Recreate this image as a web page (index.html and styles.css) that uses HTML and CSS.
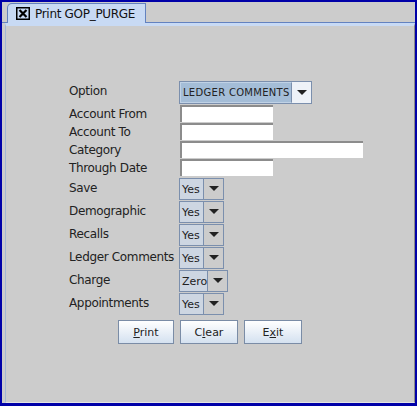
FILE: index.html
```html
<!DOCTYPE html>
<html lang="en">
<head>
    <meta charset="UTF-8">
    <title>Print GOP_PURGE</title>
    <link rel="stylesheet" href="styles.css">
</head>
<body>
<div class="window">
    <div class="tabbar">
        <div class="tab">
            <svg class="close" width="14" height="13" viewBox="0 0 14 13">
                <rect x="0.75" y="0.75" width="12.5" height="11.5" fill="none" stroke="#000" stroke-width="1.5"/>
                <path d="M3.5 3 L10.5 10 M10.5 3 L3.5 10" stroke="#000" stroke-width="2.2"/>
            </svg>
            <span>Print GOP_PURGE</span>
        </div>
    </div>

    <div class="panel">
        <form class="form" onsubmit="event.preventDefault();">
            <div class="row row-option">
                <label>Option</label>
                <div class="combo combo-option">
                    <span class="value">LEDGER COMMENTS</span>
                    <span class="arrow"></span>
                </div>
            </div>
            <div class="row row-field">
                <label for="acctFrom">Account From</label>
                <input type="text" id="acctFrom" class="field">
            </div>
            <div class="row row-field">
                <label for="acctTo">Account To</label>
                <input type="text" id="acctTo" class="field">
            </div>
            <div class="row row-field">
                <label for="category">Category</label>
                <input type="text" id="category" class="field field-wide">
            </div>
            <div class="row row-field">
                <label for="throughDate">Through Date</label>
                <input type="text" id="throughDate" class="field">
            </div>
            <div class="row row-combo">
                <label>Save</label>
                <div class="combo"><span class="value">Yes</span><span class="arrow"></span></div>
            </div>
            <div class="row row-combo">
                <label>Demographic</label>
                <div class="combo"><span class="value">Yes</span><span class="arrow"></span></div>
            </div>
            <div class="row row-combo">
                <label>Recalls</label>
                <div class="combo"><span class="value">Yes</span><span class="arrow"></span></div>
            </div>
            <div class="row row-combo">
                <label>Ledger Comments</label>
                <div class="combo"><span class="value">Yes</span><span class="arrow"></span></div>
            </div>
            <div class="row row-combo">
                <label>Charge</label>
                <div class="combo"><span class="value value-wide">Zero</span><span class="arrow"></span></div>
            </div>
            <div class="row row-combo">
                <label>Appointments</label>
                <div class="combo"><span class="value">Yes</span><span class="arrow"></span></div>
            </div>

            <div class="buttons">
                <button type="button" class="btn btn-print"><u>P</u>rint</button>
                <button type="button" class="btn">C<u>l</u>ear</button>
                <button type="button" class="btn">E<u>x</u>it</button>
            </div>
        </form>
    </div>
</div>
</body>
</html>
```

FILE: styles.css
```css
body {
    margin: 0;
    background: #0000a8;
    font-family: "DejaVu Sans", sans-serif;
    font-size: 12px;
    color: #222;
}

/* Janela interna */
.window {
    margin: 2px 2px 3px 2px;
    height: 401px;
    background: #cccccc;
    display: flex;
    flex-direction: column;
}

.tabbar {
    height: 20px;
    border-bottom: 1px solid #6382bf;
    display: flex;
    align-items: flex-end;
    padding-left: 5px;
}

.tab {
    height: 20px;
    width: 139px;
    box-sizing: border-box;
    border: 1px solid #6382bf;
    border-bottom: none;
    border-top-left-radius: 5px;
    background: #c8daf4;
    margin-bottom: -1px;
    display: flex;
    align-items: center;
    gap: 5px;
    padding-left: 8px;
    color: #111;
    font-size: 12px;
    letter-spacing: -0.3px;
    white-space: nowrap;
}

.panel {
    flex: 1;
    margin-left: 3px;
    border-top: 3px solid #c8daf4;
    border-left: 1px solid #a3b6d6;
    border-right: 1px solid #8a8a8a;
    border-bottom: 1px solid #e4e4e4;
    padding: 55px 0 0 63px;
}

/* Linhas do formulário */
.row {
    display: flex;
    align-items: center;
}

.row label {
    width: 110px;
    flex-shrink: 0;
    padding-bottom: 2px;
    white-space: nowrap;
    letter-spacing: -0.35px;
}

.row-option {
    height: 24px;
    align-items: flex-start;
}

.row-option label {
    padding-top: 3px;
}

.row-field {
    height: 18px;
    align-items: flex-start;
}

.row-field label {
    padding-top: 2px;
}

.row-combo {
    height: 23px;
}

.field {
    height: 17px;
    width: 93px;
    box-sizing: border-box;
    margin: 0 0 0 1px;
    padding: 0 2px;
    background: #fff;
    border: none;
    border-top: 2px solid #8c8c8c;
    border-left: 2px solid #8c8c8c;
    font-family: inherit;
    font-size: 12px;
}

.field-wide {
    width: 183px;
}

/* Combos */
.combo {
    display: flex;
    height: 22px;
    box-sizing: border-box;
    border: 1px solid #7b8fad;
    font-size: 11px;
}

.combo .value {
    display: flex;
    align-items: center;
    width: 21px;
    padding-left: 2px;
    padding-top: 2px;
    background: #cdd6e2;
    border-right: 1px solid #7b8fad;
    white-space: nowrap;
}

.combo .value-wide {
    width: 25px;
}

.combo .arrow {
    width: 19px;
    display: flex;
    align-items: center;
    justify-content: center;
    background: #cccccc;
}

.combo .arrow::after {
    content: "";
    border-left: 5px solid transparent;
    border-right: 5px solid transparent;
    border-top: 5px solid #222;
}

.combo-option {
    height: 23px;
}

.combo-option .value {
    width: 108px;
    padding-left: 2px;
    padding-top: 0;
    background: #a4bdd7;
    border: 1px solid #c0d2e6;
    border-right: 1px solid #7b8fad;
    letter-spacing: 0.3px;
    font-size: 10px;
    overflow: hidden;
}

.combo-option .arrow {
    background: #eef2f8;
}

/* Botões */
.buttons {
    display: flex;
    gap: 6px;
    margin: 5px 0 0 49px;
}

.btn {
    height: 24px;
    width: 58px;
    padding: 0;
    border: 1px solid #7a8ca6;
    background: linear-gradient(#ffffff, #d4e1f0);
    font-family: inherit;
    font-size: 11px;
    color: #222;
}

.btn-print {
    width: 56px;
}
```
